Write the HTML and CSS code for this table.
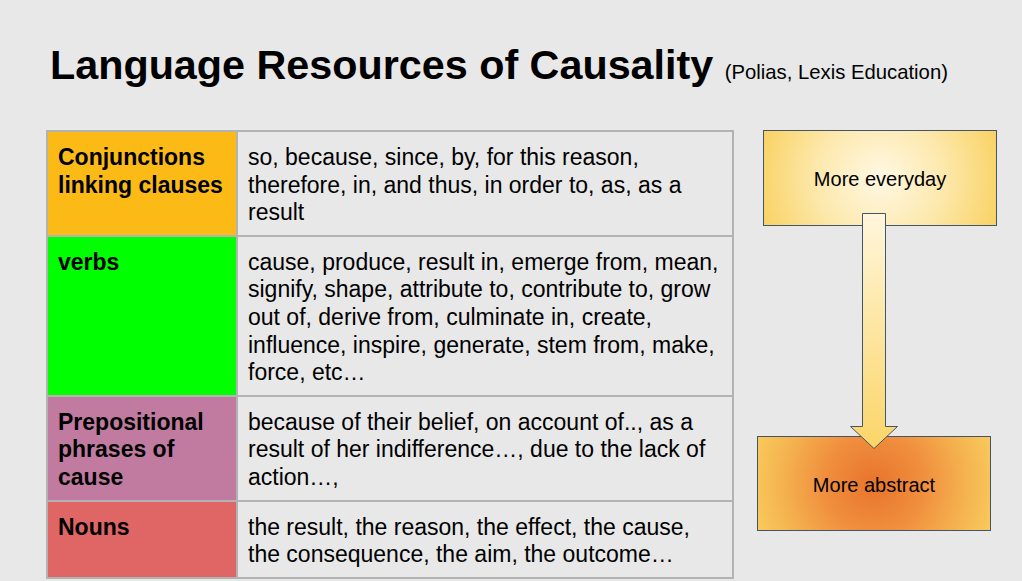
FILE: index.html
```html
<!DOCTYPE html>
<html lang="en">
<head>
<meta charset="utf-8">
<title>Language Resources of Causality</title>
<link rel="stylesheet" href="styles.css">
</head>
<body>
<div class="slide">
  <h1 class="title">Language Resources of Causality <span class="source">(Polias, Lexis Education)</span></h1>
  <div class="content">
    <table class="resources">
      <tr>
        <th class="cat cat-conj">Conjunctions<br>linking clauses</th>
        <td class="items">so, because, since, by, for this reason,<br>therefore, in, and thus, in order to, as, as a<br>result</td>
      </tr>
      <tr>
        <th class="cat cat-verb">verbs</th>
        <td class="items">cause, produce, result in, emerge from, mean,<br>signify, shape, attribute to, contribute to, grow<br>out of, derive from, culminate in, create,<br>influence, inspire, generate, stem from, make,<br>force, etc…</td>
      </tr>
      <tr>
        <th class="cat cat-prep">Prepositional<br>phrases of<br>cause</th>
        <td class="items">because of their belief, on account of.., as a<br>result of her indifference…, due to the lack of<br>action…,</td>
      </tr>
      <tr>
        <th class="cat cat-noun">Nouns</th>
        <td class="items">the result, the reason, the effect, the cause,<br>the consequence, the aim, the outcome…</td>
      </tr>
    </table>
    <div class="diagram">
      <div class="node node-top">More everyday</div>
      <div class="node node-bottom">More abstract</div>
      <svg class="arrow" width="50" height="238" viewBox="0 0 50 238">
        <defs>
          <linearGradient id="arrowGrad" x1="0" y1="0" x2="0" y2="1">
            <stop offset="0" stop-color="#fff6dc"/>
            <stop offset="1" stop-color="#fbd567"/>
          </linearGradient>
        </defs>
        <path d="M13.5 0.5 H36.5 V213.5 H48.5 L25 235.5 L1.5 213.5 H13.5 Z" fill="url(#arrowGrad)" stroke="#44546a" stroke-width="1"/>
      </svg>
    </div>
  </div>
</div>
</body>
</html>
```

FILE: styles.css
```css
html, body {
  margin: 0;
  padding: 0;
  background: #e8e8e8;
}

.slide {
  width: 1022px;
  height: 581px;
  overflow: hidden;
  font-family: "Liberation Sans", Arial, sans-serif;
  color: #000;
}

.title {
  margin: 0;
  padding: 39px 0 0 50px;
  font-size: 41.3px;
  line-height: 52px;
  font-weight: bold;
  white-space: nowrap;
}

.source {
  font-size: 20.3px;
  font-weight: normal;
  margin-left: 0;
}

.content {
  display: flex;
  align-items: flex-start;
  padding: 32px 0 0 46px;
}

.resources {
  border-collapse: collapse;
  width: 691px;
  font-size: 23px;
  line-height: 27.6px;
  white-space: nowrap;
}

.resources th,
.resources td {
  border: 2px solid #b3b3b3;
  padding: 12px 8px 8px 10px;
  vertical-align: top;
  text-align: left;
}

.cat {
  width: 170px;
  font-weight: bold;
}

.items {
  font-weight: normal;
  background: #e8e8e8;
}

.cat-conj { background: #fbba16; }
.cat-verb { background: #00ff00; }
.cat-prep { background: #c27ba0; }
.cat-noun { background: #e06666; }

.diagram {
  position: relative;
  flex: 0 0 auto;
  width: 260px;
  height: 420px;
  margin-left: 28px;
}

.node {
  position: absolute;
  border: 1px solid #44546a;
  display: flex;
  align-items: center;
  justify-content: center;
  padding-top: 3px;
  font-size: 20px;
  box-sizing: border-box;
}

.node-top {
  left: 1px;
  top: 0;
  width: 234px;
  height: 96px;
  background: radial-gradient(circle 125px at 50% 50%, #fff8e3 0%, #fde9ae 50%, #f9d263 100%);
}

.node-bottom {
  left: -5px;
  top: 306px;
  width: 234px;
  height: 95px;
  background: radial-gradient(circle 125px at 50% 50%, #e8742c 0%, #f08f3e 40%, #f5b450 75%, #f9ca5c 100%);
}

.arrow {
  position: absolute;
  left: 87px;
  top: 83px;
}
```
